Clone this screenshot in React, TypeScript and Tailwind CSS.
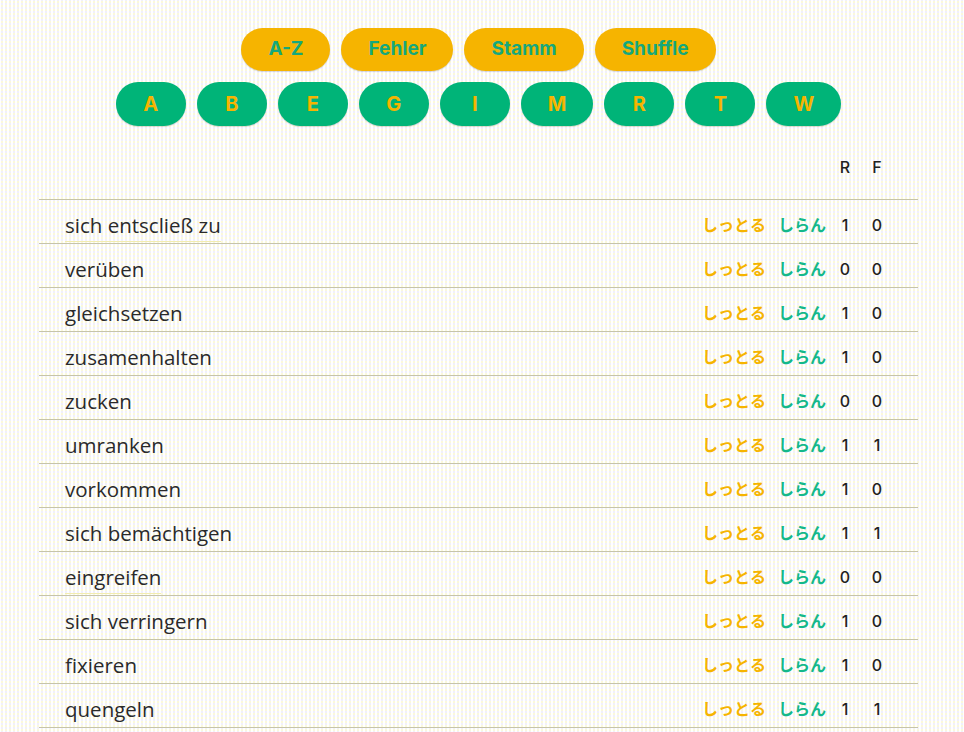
import React from "react";

const top = ["A-Z", "Fehler", "Stamm", "Shuffle"];
const letters = ["A", "B", "E", "G", "I", "M", "R", "T", "W"];
const rows: [string, number, number, boolean][] = [
  ["sich entscließ zu", 1, 0, true],
  ["verüben", 0, 0, false],
  ["gleichsetzen", 1, 0, false],
  ["zusamenhalten", 1, 0, false],
  ["zucken", 0, 0, false],
  ["umranken", 1, 1, false],
  ["vorkommen", 1, 0, false],
  ["sich bemächtigen", 1, 1, false],
  ["eingreifen", 0, 0, true],
  ["sich verringern", 1, 0, false],
  ["fixieren", 1, 0, false],
  ["quengeln", 1, 1, false],
];

export default function App() {
  return (
    <div className="min-h-screen w-full bg-white [background-image:radial-gradient(circle,#f5f1b0_0.6px,transparent_0.8px),radial-gradient(circle,#dfdcf7_0.6px,transparent_0.8px)] [background-size:4px_4px] [background-position:0_0,0_2px]">
      <div className="w-[957px]">
        <div className="flex flex-col items-center pt-[28px] gap-[11px] font-['Inter',sans-serif]">
          <div className="flex gap-[11px]">
            {top.map((t) => (
              <button
                key={t}
                className="h-[43px] px-[27px] rounded-full bg-[#f6b400] text-[#15a87c] text-[19px] font-bold shadow-[0_1px_1px_rgba(0,0,0,0.15)]"
              >
                {t}
              </button>
            ))}
          </div>
          <div className="flex gap-[11px]">
            {letters.map((l) => (
              <button
                key={l}
                className="h-[44px] min-w-[70px] px-[27px] rounded-full bg-[#00b478] text-[#f6b400] text-[20px] font-bold shadow-[0_1px_1px_rgba(0,0,0,0.15)]"
              >
                {l}
              </button>
            ))}
          </div>
        </div>
        <div className="mx-[39px] w-[879px] mt-[14px]">
          <div className="h-[60px] flex items-end pb-[20px] border-b border-[#c6c4aa] font-['Inter',sans-serif] text-[16px] font-medium text-[#222]">
            <div className="flex-1" />
            <div className="w-[32px] text-center">R</div>
            <div className="w-[32px] text-center">F</div>
            <div className="w-[25px]" />
          </div>
          {rows.map(([w, r, f, u], i) => (
            <div
              key={i}
              className="h-[44px] flex items-center border-b border-[#c6c4aa]"
            >
              <div className="flex-1 pl-[26px] pt-[7px] font-['Open_Sans',sans-serif] text-[20.5px] leading-[28px] text-[#2a2a2a]">
                <span className={u ? "border-b border-[#f2ecb0] pb-[2px]" : ""}>{w}</span>
              </div>
              <div className="pt-[4px] font-['Noto_Sans_CJK_JP',sans-serif] text-[16px] font-bold text-[#f6b400]">
                しっとる
              </div>
              <div className="ml-[12px] mr-[3px] pt-[4px] font-['Noto_Sans_CJK_JP',sans-serif] text-[16px] font-bold text-[#14b88a]">
                しらん
              </div>
              <div className="w-[32px] pt-[6px] text-center font-['Inter',sans-serif] text-[16px] font-medium text-[#222]">
                {r}
              </div>
              <div className="w-[32px] pt-[6px] text-center font-['Inter',sans-serif] text-[16px] font-medium text-[#222]">
                {f}
              </div>
              <div className="w-[25px]" />
            </div>
          ))}
        </div>
      </div>
    </div>
  );
}
